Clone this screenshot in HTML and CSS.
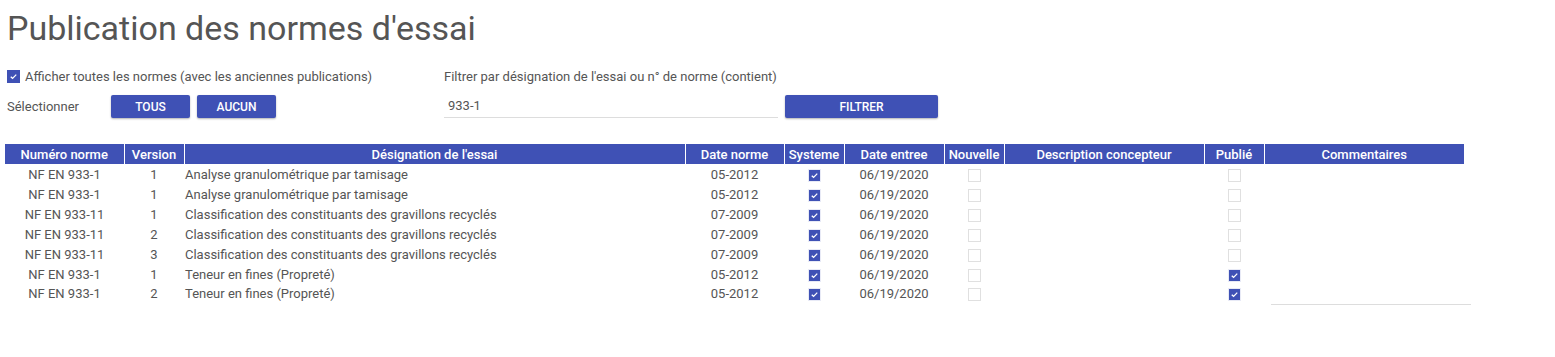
FILE: index.html
```html
<!DOCTYPE html>
<html lang="fr">
<head>
<meta charset="utf-8">
<title>Publication des normes d'essai</title>
<link rel="stylesheet" href="styles.css">
</head>
<body>
<div class="page">
  <h1 class="title">Publication des normes d'essai</h1>
  <div class="controls">
    <div class="left">
      <label class="check-row">
        <span class="cb on"><svg viewBox="0 0 12 12"><path d="M3 6.2 L5 8 L9 4" /></svg></span>
        <span>Afficher toutes les normes (avec les anciennes publications)</span>
      </label>
      <div class="select-row">
        <span class="select-label">Sélectionner</span>
        <button class="btn btn-sm">TOUS</button>
        <button class="btn btn-sm">AUCUN</button>
      </div>
    </div>
    <div class="right">
      <div class="filter-label">Filtrer par désignation de l'essai ou n° de norme (contient)</div>
      <div class="filter-row">
        <div class="input">933-1</div>
        <button class="btn btn-lg">FILTRER</button>
      </div>
    </div>
  </div>

  <table class="grid">
    <colgroup>
      <col style="width:119px"><col style="width:60px"><col style="width:501px"><col style="width:99px"><col style="width:60px"><col style="width:100px"><col style="width:60px"><col style="width:200px"><col style="width:60px"><col style="width:200px">
    </colgroup>
    <thead>
      <tr>
        <th>Numéro norme</th><th>Version</th><th>Désignation de l'essai</th><th>Date norme</th><th>Systeme</th><th>Date entree</th><th>Nouvelle</th><th>Description concepteur</th><th>Publié</th><th>Commentaires</th>
      </tr>
    </thead>
    <tbody>
      <tr>
        <td class="c">NF EN 933-1</td><td class="c">1</td><td class="l">Analyse granulométrique par tamisage</td><td class="c">05-2012</td>
        <td class="c"><span class="cb on"><svg viewBox="0 0 12 12"><path d="M3 6.2 L5 8 L9 4" /></svg></span></td>
        <td class="c">06/19/2020</td><td class="c"><span class="cb"></span></td><td></td><td class="c"><span class="cb"></span></td><td></td>
      </tr>
      <tr>
        <td class="c">NF EN 933-1</td><td class="c">1</td><td class="l">Analyse granulométrique par tamisage</td><td class="c">05-2012</td>
        <td class="c"><span class="cb on"><svg viewBox="0 0 12 12"><path d="M3 6.2 L5 8 L9 4" /></svg></span></td>
        <td class="c">06/19/2020</td><td class="c"><span class="cb"></span></td><td></td><td class="c"><span class="cb"></span></td><td></td>
      </tr>
      <tr>
        <td class="c">NF EN 933-11</td><td class="c">1</td><td class="l">Classification des constituants des gravillons recyclés</td><td class="c">07-2009</td>
        <td class="c"><span class="cb on"><svg viewBox="0 0 12 12"><path d="M3 6.2 L5 8 L9 4" /></svg></span></td>
        <td class="c">06/19/2020</td><td class="c"><span class="cb"></span></td><td></td><td class="c"><span class="cb"></span></td><td></td>
      </tr>
      <tr>
        <td class="c">NF EN 933-11</td><td class="c">2</td><td class="l">Classification des constituants des gravillons recyclés</td><td class="c">07-2009</td>
        <td class="c"><span class="cb on"><svg viewBox="0 0 12 12"><path d="M3 6.2 L5 8 L9 4" /></svg></span></td>
        <td class="c">06/19/2020</td><td class="c"><span class="cb"></span></td><td></td><td class="c"><span class="cb"></span></td><td></td>
      </tr>
      <tr>
        <td class="c">NF EN 933-11</td><td class="c">3</td><td class="l">Classification des constituants des gravillons recyclés</td><td class="c">07-2009</td>
        <td class="c"><span class="cb on"><svg viewBox="0 0 12 12"><path d="M3 6.2 L5 8 L9 4" /></svg></span></td>
        <td class="c">06/19/2020</td><td class="c"><span class="cb"></span></td><td></td><td class="c"><span class="cb"></span></td><td></td>
      </tr>
      <tr>
        <td class="c">NF EN 933-1</td><td class="c">1</td><td class="l">Teneur en fines (Propreté)</td><td class="c">05-2012</td>
        <td class="c"><span class="cb on"><svg viewBox="0 0 12 12"><path d="M3 6.2 L5 8 L9 4" /></svg></span></td>
        <td class="c">06/19/2020</td><td class="c"><span class="cb"></span></td><td></td>
        <td class="c"><span class="cb on"><svg viewBox="0 0 12 12"><path d="M3 6.2 L5 8 L9 4" /></svg></span></td><td></td>
      </tr>
      <tr class="last">
        <td class="c">NF EN 933-1</td><td class="c">2</td><td class="l">Teneur en fines (Propreté)</td><td class="c">05-2012</td>
        <td class="c"><span class="cb on"><svg viewBox="0 0 12 12"><path d="M3 6.2 L5 8 L9 4" /></svg></span></td>
        <td class="c">06/19/2020</td><td class="c"><span class="cb"></span></td><td></td>
        <td class="c"><span class="cb on"><svg viewBox="0 0 12 12"><path d="M3 6.2 L5 8 L9 4" /></svg></span></td>
        <td class="comment"><div class="comment-input"></div></td>
      </tr>
    </tbody>
  </table>
</div>
</body>
</html>
```

FILE: styles.css
```css
html, body {
  margin: 0;
  padding: 0;
  background: #fff;
}
body {
  font-family: Roboto, "Liberation Sans", Arial, sans-serif;
  color: #555;
  font-size: 13px;
}
.title {
  margin: 0;
  padding: 6px 0 0 7px;
  font-size: 34px;
  font-weight: 400;
  line-height: 44px;
  color: #555;
}
.controls {
  display: flex;
  margin-top: 15px;
  padding-left: 7px;
}
.left {
  width: 437px;
  display: flex;
  flex-direction: column;
}
.check-row {
  display: flex;
  align-items: center;
  gap: 5px;
  height: 22px;
  font-size: 13px;
}
.select-row {
  display: flex;
  align-items: center;
  margin-top: 8px;
  height: 23px;
}
.select-label {
  width: 104px;
}
.btn {
  background: #3f51b5;
  color: #fff;
  border: none;
  border-radius: 2px;
  font-family: Roboto, "Liberation Sans", Arial, sans-serif;
  font-size: 12px;
  font-weight: 500;
  height: 23px;
  padding: 0;
  box-shadow: 0 1px 2px rgba(0,0,0,0.3);
}
.btn-sm {
  width: 79px;
  margin-right: 7px;
}
.btn-lg {
  width: 153px;
  margin-left: 7px;
}
.right {
  display: flex;
  flex-direction: column;
}
.filter-label {
  height: 22px;
  line-height: 24px;
  font-size: 13px;
}
.filter-row {
  display: flex;
  margin-top: 8px;
  align-items: flex-start;
}
.input {
  width: 330px;
  height: 22px;
  line-height: 22px;
  padding-left: 4px;
  border-bottom: 1px solid #ddd;
  font-size: 13px;
  color: #555;
}
.grid {
  margin: 26px 0 0 5px;
  border-collapse: collapse;
  table-layout: fixed;
  width: 1459px;
}
.grid th {
  background: #3f51b5;
  color: #fff;
  font-weight: 500;
  font-size: 13px;
  height: 20px;
  padding: 0;
  border-left: 1px solid #fff;
  text-align: center;
  white-space: nowrap;
  overflow: hidden;
}
.grid th:first-child {
  border-left: none;
}
.grid td {
  height: 20px;
  padding: 0;
  font-size: 13px;
  white-space: nowrap;
  vertical-align: middle;
}
.grid tr.last td {
  vertical-align: top;
  line-height: 20px;
}
.grid td.c { text-align: center; }
.grid td.l { padding-left: 1px; }
.cb {
  display: inline-block;
  width: 11px;
  height: 11px;
  border: 1px solid #e0e0e0;
  background: #fff;
  vertical-align: middle;
  box-sizing: content-box;
}
.cb.on {
  background: #3f51b5;
  border-color: #e8eaf6;
}
.cb svg {
  display: block;
  width: 11px;
  height: 11px;
}
.cb svg path {
  fill: none;
  stroke: #fff;
  stroke-width: 1.4;
}
.check-row .cb {
  border-color: #3f51b5;
}
.comment-input {
  width: 200px;
  height: 20px;
  margin-left: 7px;
  border-bottom: 1px solid #ddd;
}
```
